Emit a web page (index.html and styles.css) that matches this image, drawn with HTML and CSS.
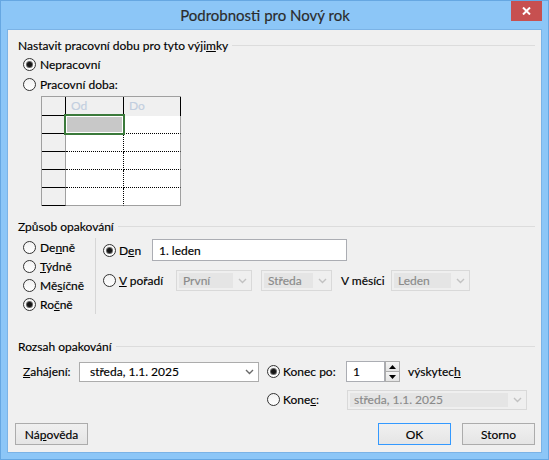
FILE: index.html
```html
<!DOCTYPE html>
<html lang="cs">
<head>
<meta charset="utf-8">
<title>Podrobnosti pro Nový rok</title>
<link rel="stylesheet" href="styles.css">
</head>
<body>
<div class="window">
  <header class="titlebar">
    <div class="title">Podrobnosti pro Nový rok</div>
    <button class="close" aria-label="Zavřít"><svg width="9" height="8" viewBox="0 0 9 8"><path d="M1 0.5 L8 7.5 M8 0.5 L1 7.5" stroke="#fff" stroke-width="2" fill="none"/></svg></button>
  </header>
  <main class="client">
    <section class="group g-hours">
      <div class="legend"><span>Nastavit pracovní dobu pro tyto výji<u>m</u>ky</span><i class="rule"></i></div>
      <label class="opt row20"><span class="rb on"></span><span>Nepracovní</span></label>
      <label class="opt row20"><span class="rb"></span><span>Pracovní doba:</span></label>
      <div class="hours">
        <div class="c corner"></div><div class="c hd">Od</div><div class="c hd">Do</div>
        <div class="c rh"></div><div class="c d od sel"></div><div class="c d do"></div>
        <div class="c rh"></div><div class="c d od"></div><div class="c d do"></div>
        <div class="c rh"></div><div class="c d od"></div><div class="c d do"></div>
        <div class="c rh"></div><div class="c d od"></div><div class="c d do"></div>
        <div class="c rh"></div><div class="c d od last"></div><div class="c d do last"></div>
      </div>
    </section>

    <section class="group g-pattern">
      <div class="legend"><span>Způsob opakování</span><i class="rule"></i></div>
      <div class="pattern">
        <div class="freq">
          <label class="opt"><span class="rb"></span><span>De<u>n</u>ně</span></label>
          <label class="opt"><span class="rb"></span><span><u>T</u>ýdně</span></label>
          <label class="opt"><span class="rb"></span><span>Mě<u>s</u>íčně</span></label>
          <label class="opt"><span class="rb on"></span><span>Ro<u>č</u>ně</span></label>
        </div>
        <div class="detail">
          <div class="drow den">
            <label class="opt lab-den"><span class="rb on"></span><span>D<u>e</u>n</span></label>
            <div class="textbox w-day">1. leden</div>
          </div>
          <div class="drow nth">
            <label class="opt lab-nth"><span class="rb"></span><span><u>V</u> pořadí</span></label>
            <div class="combo dis w-first"><span class="val">První</span><span class="arr"><svg width="9" height="6" viewBox="0 0 9 6"><path d="M1 1 L4.5 4.5 L8 1" fill="none" stroke="currentColor" stroke-width="1.4"/></svg></span></div>
            <div class="combo dis w-day2"><span class="val">Středa</span><span class="arr"><svg width="9" height="6" viewBox="0 0 9 6"><path d="M1 1 L4.5 4.5 L8 1" fill="none" stroke="currentColor" stroke-width="1.4"/></svg></span></div>
            <span class="inmonth">V měsíci</span>
            <div class="combo dis w-month"><span class="val">Leden</span><span class="arr"><svg width="9" height="6" viewBox="0 0 9 6"><path d="M1 1 L4.5 4.5 L8 1" fill="none" stroke="currentColor" stroke-width="1.4"/></svg></span></div>
          </div>
        </div>
      </div>
    </section>

    <section class="group g-range">
      <div class="legend"><span>Rozsah opakování</span><i class="rule"></i></div>
      <div class="range">
        <div class="start">
          <span class="lbl"><u>Z</u>ahájení:</span>
          <div class="combo w-date"><span class="val">středa, 1.1. 2025</span><span class="arr"><svg width="9" height="6" viewBox="0 0 9 6"><path d="M1 1 L4.5 4.5 L8 1" fill="none" stroke="currentColor" stroke-width="1.4"/></svg></span></div>
        </div>
        <div class="ends">
          <div class="erow">
            <label class="opt lab-after"><span class="rb on"></span><span>Konec po:</span></label>
            <div class="textbox num">1</div>
            <div class="spin">
              <span class="sbtn"><svg width="7" height="4" viewBox="0 0 7 4"><path d="M0 4 L3.5 0 L7 4 Z" fill="#000"/></svg></span>
              <span class="sbtn"><svg width="7" height="4" viewBox="0 0 7 4"><path d="M0 0 L3.5 4 L7 0 Z" fill="#000"/></svg></span>
            </div>
            <span class="occ">výskytec<u>h</u></span>
          </div>
          <div class="erow">
            <label class="opt lab-end"><span class="rb"></span><span>Kone<u>c</u>:</span></label>
            <div class="combo dis w-date"><span class="val">středa, 1.1. 2025</span><span class="arr"><svg width="9" height="6" viewBox="0 0 9 6"><path d="M1 1 L4.5 4.5 L8 1" fill="none" stroke="currentColor" stroke-width="1.4"/></svg></span></div>
          </div>
        </div>
      </div>
    </section>

    <div class="buttons">
      <button class="btn">Ná<u>p</u>ověda</button>
      <span class="spacer"></span>
      <button class="btn default">OK</button>
      <button class="btn">Storno</button>
    </div>
  </main>
</div>
</body>
</html>
```

FILE: styles.css
```css
* { box-sizing: border-box; }
html, body { margin: 0; padding: 0; }
body {
  width: 549px;
  height: 460px;
  overflow: hidden;
  font-family: Lato, "Segoe UI", "Noto Sans", sans-serif;
  font-size: 12px;
  color: #000;
  -webkit-text-stroke: 0.15px currentColor;
}
u { text-underline-offset: 1px; }

.window {
  width: 549px;
  height: 460px;
  background: #8cc6f7;
  border: 1px solid #66a7e2;
  display: flex;
  flex-direction: column;
}
.titlebar { height: 28px; display: flex; align-items: flex-start; }
.title {
  flex: 1;
  text-align: center;
  font-size: 15px;
  line-height: 28px;
  color: #2b2b2b;
  padding-left: 18px;
}
.close {
  width: 31px;
  height: 20px;
  margin-right: 6px;
  border: 0;
  padding: 0;
  background: #c75050;
  display: flex;
  align-items: center;
  justify-content: center;
}

.client {
  margin: 0 6px;
  height: 424px;
  border: 1px solid #7bb3e6;
  background: #f0f0f0;
  padding: 0 6px 0 7px;
}

.group { padding-left: 3px; }
.legend { display: flex; height: 16px; line-height: 16px; white-space: nowrap; }
.legend .rule { flex: 1; height: 1px; background: #dcdcdc; margin: 7px 0 0 4px; }

.opt { display: flex; align-items: center; gap: 4px; white-space: nowrap; }
.rb {
  flex: none;
  position: relative;
  width: 13px;
  height: 13px;
  border-radius: 50%;
  border: 1px solid #333;
  background: linear-gradient(#f2f2f2, #ffffff);
}
.rb.on::after {
  content: "";
  position: absolute;
  left: 3px;
  top: 3px;
  width: 5px;
  height: 5px;
  border-radius: 50%;
  background: #151515;
  box-shadow: 0 0 0 1px #666;
}

/* group 1 */
.g-hours { margin-top: 8px; }
.row20 { height: 20px; padding-left: 5px; }
.hours {
  margin: 2px 0 0 23px;
  display: grid;
  width: 140px;
  grid-template-columns: 24px 58px 57px;
  grid-template-rows: 19px repeat(5, 18px);
  border-top: 1px solid #a0a0a0;
  border-left: 1px solid #a0a0a0;
}
.c { background: #fff; }
.corner { background: #f0f0f0; border-right: 1px solid #000; border-bottom: 1px solid #000; }
.hd {
  background: #f0f0f0;
  border-right: 1px solid #000;
  color: #c2cedf;
  padding-left: 5px;
  line-height: 18px;
}
.rh { background: #f0f0f0; border-right: 1px solid #a0a0a0; border-bottom: 1px solid #000; }
.d.od { border-right: 1px dotted #000; border-bottom: 1px dotted #000; }
.d.do { border-right: 1px solid #a0a0a0; border-bottom: 1px dotted #000; }
.d.last { border-bottom: 1px solid #a0a0a0; }
.sel { position: relative; }
.sel::before {
  content: "";
  position: absolute;
  left: 1px; top: 1px; right: 1px; bottom: 1px;
  background: #c8c8c8;
}
.sel::after {
  content: "";
  position: absolute;
  left: -2px; top: -2px; right: -2px; bottom: -2px;
  border: 2px solid #3b7a3b;
}

/* group 2 */
.g-pattern { margin-top: 13px; }
.pattern { display: flex; margin-top: 3px; }
.freq { width: 78px; border-right: 1px solid #d6d6d6; padding-left: 5px; }
.freq .opt { height: 19px; }
.detail { padding: 1px 0 0 7px; }
.drow { display: flex; align-items: center; }
.den { height: 22px; }
.nth { height: 21px; margin-top: 9px; }
.lab-den { width: 49px; gap: 3px; }
.lab-nth { width: 73px; gap: 3px; }

.textbox {
  display: flex;
  align-items: center;
  height: 22px;
  border: 1px solid #abadb3;
  background: #fff;
  padding-left: 6px;
}
.w-day { width: 195px; }

.combo {
  display: flex;
  align-items: stretch;
  height: 20px;
  border: 1px solid #acacac;
  background: #fff;
  color: #000;
}
.combo .val { flex: 1; display: flex; align-items: center; padding-left: 10px; white-space: nowrap; }
.combo .arr { width: 17px; display: flex; align-items: center; justify-content: center; color: #6a6a6a; }
.combo.dis { border-color: #d9d9d9; background: #efefef; color: #8a8a8a; padding: 2px 0 2px 2px; }
.combo.dis .val { background: #e5e5e5; padding-left: 4px; }
.combo.dis .arr { width: 18px; color: #c2c2c2; }
.w-first { width: 76px; height: 21px; }
.w-day2 { width: 71px; height: 21px; margin-left: 9px; }
.inmonth { margin-left: 9px; width: 50px; }
.w-month { width: 79px; height: 21px; }

/* group 3 */
.g-range { margin-top: 25px; }
.range { display: grid; grid-template-columns: 249px 1fr; margin-top: 6px; }
.start { display: flex; align-items: center; height: 21px; padding-left: 5px; }
.start .lbl { width: 56px; }
.w-date { width: 180px; }
.erow { display: flex; align-items: center; height: 21px; }
.erow + .erow { margin-top: 7px; }
.lab-after { width: 79px; gap: 3px; }
.lab-end { width: 80px; gap: 3px; }
.textbox.num { width: 39px; height: 21px; }
.spin { width: 15px; height: 21px; display: flex; flex-direction: column; }
.sbtn {
  height: 11px;
  border: 1px solid #acacac;
  background: linear-gradient(#f4f4f4, #e4e4e4);
  display: flex;
  align-items: center;
  justify-content: center;
}
.sbtn + .sbtn { margin-top: -1px; }
.occ { margin-left: 8px; }

/* buttons */
.buttons { display: flex; margin-top: 13px; }
.spacer { flex: 1; }
.btn {
  width: 73px;
  height: 22px;
  border: 1px solid #acacac;
  background: linear-gradient(#f0f0f0, #e5e5e5);
  font: inherit;
  color: #000;
  padding: 0;
}
.btn.default { border-color: #3399ff; }
.btn.default + .btn { margin-left: 11px; }
```
